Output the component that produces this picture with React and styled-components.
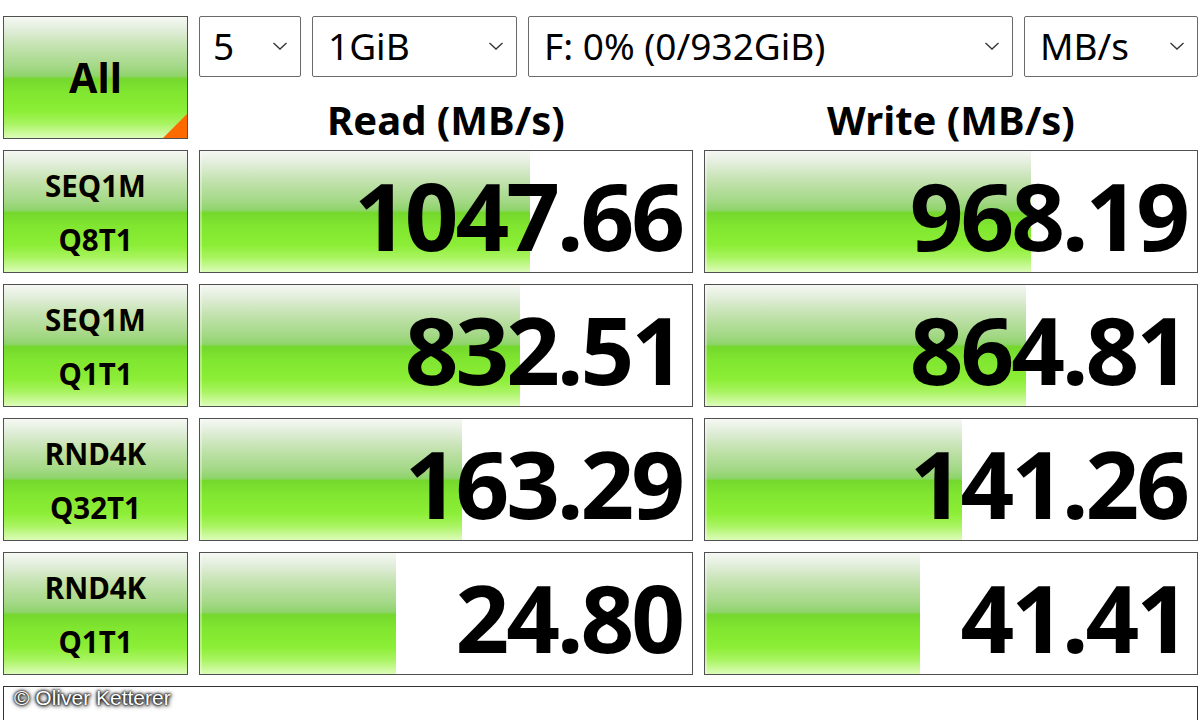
import React from "react";
import styled, { createGlobalStyle, css } from "styled-components";

const Global = createGlobalStyle`
  html, body { margin: 0; padding: 0; background: #ffffff; }
  body { width: 1200px; height: 720px; overflow: hidden; font-family: "Noto Sans", "Open Sans", sans-serif; }
`;

const greenGradient = css`
  background: linear-gradient(
    to bottom,
    #f6f8f4 0%,
    #e2eedb 10%,
    #c2e2ae 25%,
    #a2d884 42%,
    #8ed46a 49%,
    #74d82c 51%,
    #80e630 62%,
    #8cee36 78%,
    #a8f460 88%,
    #dcfcb8 100%
  );
`;

const Grid = styled.div`
  display: grid;
  grid-template-columns: 185px 494px 494px;
  grid-template-rows: repeat(5, 123px) 40px;
  column-gap: 11px;
  row-gap: 11px;
  padding: 16px 0 0 3px;
`;

const LabelButton = styled.div`
  position: relative;
  box-sizing: border-box;
  border: 1px solid #505050;
  ${greenGradient}
  display: flex;
  flex-direction: column;
  align-items: center;
  justify-content: center;
  color: #000;
  font-weight: 700;
  font-size: ${(p) => (p.$big ? "41px" : "29.5px")};
  line-height: ${(p) => (p.$big ? "1.2" : "54px")};
  padding-top: ${(p) => (p.$big ? "0" : "2px")};
  text-shadow: 0 0 1px rgba(230, 230, 60, 0.8);
  overflow: hidden;
`;

const Corner = styled.div`
  position: absolute;
  right: 0;
  bottom: 0;
  width: 0;
  height: 0;
  border-style: solid;
  border-width: 0 0 24px 24px;
  border-color: transparent transparent #ff6a00 transparent;
`;

const TopRight = styled.div`
  grid-column: 2 / 4;
  display: flex;
  flex-direction: column;
`;

const SelectRow = styled.div`
  display: flex;
  gap: 11px;
  height: 61px;
`;

const Select = styled.div`
  box-sizing: border-box;
  width: ${(p) => p.$w}px;
  height: 61px;
  border: 1px solid #6a6a6a;
  border-radius: 2px;
  background: #fff;
  display: flex;
  align-items: center;
  justify-content: space-between;
  padding: 0 12px 2px ${(p) => p.$pl || 15}px;
  font-size: 37px;
  color: #000;
  font-weight: 400;
`;

const Chevron = styled.svg`
  width: 16px;
  height: 10px;
  flex: none;
`;

const HeaderRow = styled.div`
  display: grid;
  grid-template-columns: 494px 494px;
  column-gap: 11px;
  flex: 1;
`;

const Header = styled.div`
  display: flex;
  align-items: center;
  justify-content: center;
  font-size: 40px;
  font-weight: 700;
  line-height: 36px;
  color: #000;
  padding-top: 24px;
`;

const Cell = styled.div`
  position: relative;
  box-sizing: border-box;
  border: 1px solid #505050;
  background: #fff;
  display: flex;
  align-items: center;
  justify-content: flex-end;
  padding: 8px 10px 0 0;
`;

const Bar = styled.div`
  position: absolute;
  left: 0;
  top: 0;
  bottom: 0;
  ${greenGradient}
  box-shadow: inset 2px 0 0 rgba(255, 255, 255, 0.35);
`;

const Value = styled.span`
  position: relative;
  font-size: 94px;
  font-weight: 700;
  letter-spacing: -3px;
  line-height: 1.15;
  color: #000;
`;

const Footer = styled.div`
  grid-column: 1 / -1;
  box-sizing: border-box;
  border: 1px solid #333;
  border-bottom: none;
  background: #fff;
  padding: 0 0 0 10px;
  width: 1195px;
`;

const Watermark = styled.span`
  font-family: "Liberation Sans", Arial, sans-serif;
  font-size: 21px;
  line-height: 22px;
  color: #ffffff;
  text-shadow: 0 0 2px #000, 0 0 3px #111, 0 0 5px #444, 1px 1px 4px #333;
`;

const ChevronIcon = () => (
  <Chevron viewBox="0 0 16 10">
    <path d="M1.5 2 L8 8 L14.5 2" fill="none" stroke="#333" strokeWidth="1.3" />
  </Chevron>
);

const rows = [
  { l1: "SEQ1M", l2: "Q8T1", r: "1047.66", rw: 67.0, w: "968.19", ww: 66.3 },
  { l1: "SEQ1M", l2: "Q1T1", r: "832.51", rw: 65.1, w: "864.81", ww: 65.3 },
  { l1: "RND4K", l2: "Q32T1", r: "163.29", rw: 53.3, w: "141.26", ww: 52.3 },
  { l1: "RND4K", l2: "Q1T1", r: "24.80", rw: 39.8, w: "41.41", ww: 43.6 },
];

export default function App() {
  return (
    <>
      <Global />
      <Grid>
        <LabelButton $big>
          All
          <Corner />
        </LabelButton>
        <TopRight>
          <SelectRow>
            <Select $w={102} $pl={13}>
              <span>5</span>
              <ChevronIcon />
            </Select>
            <Select $w={205}>
              <span>1GiB</span>
              <ChevronIcon />
            </Select>
            <Select $w={485}>
              <span>F: 0% (0/932GiB)</span>
              <ChevronIcon />
            </Select>
            <Select $w={174}>
              <span>MB/s</span>
              <ChevronIcon />
            </Select>
          </SelectRow>
          <HeaderRow>
            <Header>Read (MB/s)</Header>
            <Header>Write (MB/s)</Header>
          </HeaderRow>
        </TopRight>
        {rows.map((row) => (
          <React.Fragment key={row.l1 + row.l2}>
            <LabelButton>
              <span>{row.l1}</span>
              <span>{row.l2}</span>
            </LabelButton>
            <Cell>
              <Bar style={{ width: `${row.rw}%` }} />
              <Value>{row.r}</Value>
            </Cell>
            <Cell>
              <Bar style={{ width: `${row.ww}%` }} />
              <Value>{row.w}</Value>
            </Cell>
          </React.Fragment>
        ))}
        <Footer>
          <Watermark>© Oliver Ketterer</Watermark>
        </Footer>
      </Grid>
    </>
  );
}
